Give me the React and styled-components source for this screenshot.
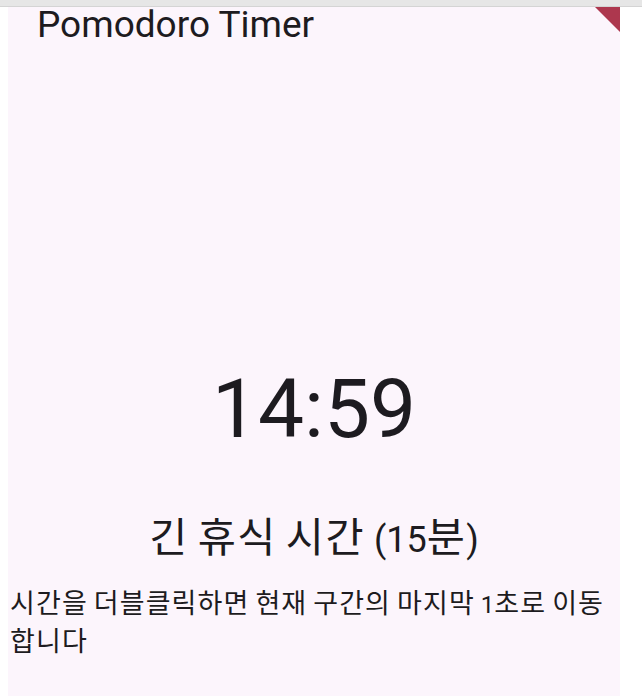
import React from 'react';
import styled, { createGlobalStyle } from 'styled-components';

const GlobalStyle = createGlobalStyle`
  html, body {
    margin: 0;
    padding: 0;
    background: #fff;
  }
  body {
    font-family: Roboto, 'Noto Sans CJK KR', sans-serif;
  }
`;

const Screen = styled.div`
  position: relative;
  display: flex;
  width: 642px;
  height: 696px;
  padding-left: 8px;
  box-sizing: border-box;
  overflow: hidden;
`;

// browser chrome edge lying over the top of the page
const TopStrip = styled.div`
  position: absolute;
  top: 0;
  left: 0;
  right: 0;
  height: 6px;
  background: #e6e6e6;
  border-bottom: 1px solid #d4d4d4;
  z-index: 2;
`;

const Panel = styled.div`
  position: relative;
  width: 612px;
  display: flex;
  flex-direction: column;
  background: #fcf5fc;
  overflow: hidden;
`;

const AppBar = styled.header`
  padding: 3px 0 0 29px;
`;

const Title = styled.h1`
  margin: 0;
  font-family: Roboto, sans-serif;
  font-size: 37px;
  font-weight: 400;
  line-height: 44px;
  color: #1d1b20;
`;

const DebugBanner = styled.div`
  position: absolute;
  top: 7px;
  right: 0;
  width: 25px;
  height: 25px;
  background: #ad374e;
  clip-path: polygon(0 0, 100% 0, 100% 100%);
`;

const Body = styled.main`
  display: flex;
  flex-direction: column;
  align-items: center;
  padding-top: 313px;
`;

const Clock = styled.div`
  font-family: Roboto, sans-serif;
  font-size: 82px;
  line-height: 98px;
  color: #1d1b20;
  user-select: none;
`;

const Phase = styled.div`
  margin-top: 56px;
  font-family: Roboto, sans-serif;
  font-size: 36px;
  line-height: 44px;
  color: #1d1b20;
`;

const Hint = styled.p`
  align-self: stretch;
  margin: 24px 0 0;
  padding-left: 2px;
  font-family: Roboto, sans-serif;
  font-size: 24px;
  line-height: 38px;
  color: #1d1b20;
`;

const Hangul = styled.span`
  font-family: 'Noto Sans CJK KR', sans-serif;
  font-size: ${(p) => p.$scale}em;
  letter-spacing: ${(p) => p.$track}px;
  line-height: 1;
`;

const HANGUL = /([\uAC00-\uD7A3]+)/;

function Mixed({ text, scale, track }) {
  return text
    .split(HANGUL)
    .filter(Boolean)
    .map((part, i) =>
      HANGUL.test(part) ? (
        <Hangul key={i} $scale={scale} $track={track}>
          {part}
        </Hangul>
      ) : (
        part
      )
    );
}

export default function App() {
  return (
    <>
      <GlobalStyle />
      <Screen>
        <TopStrip />
        <Panel>
          <AppBar>
            <Title>Pomodoro Timer</Title>
          </AppBar>
          <Body>
            <Clock>14:59</Clock>
            <Phase>
              <Mixed text="긴 휴식 시간 (15분)" scale={1.15} track={1.5} />
            </Phase>
            <Hint>
              <Mixed text="시간을 더블클릭하면 현재 구간의 마지막 1초로 이동합니다" scale={1.125} track={1.1} />
            </Hint>
          </Body>
          <DebugBanner />
        </Panel>
      </Screen>
    </>
  );
}
